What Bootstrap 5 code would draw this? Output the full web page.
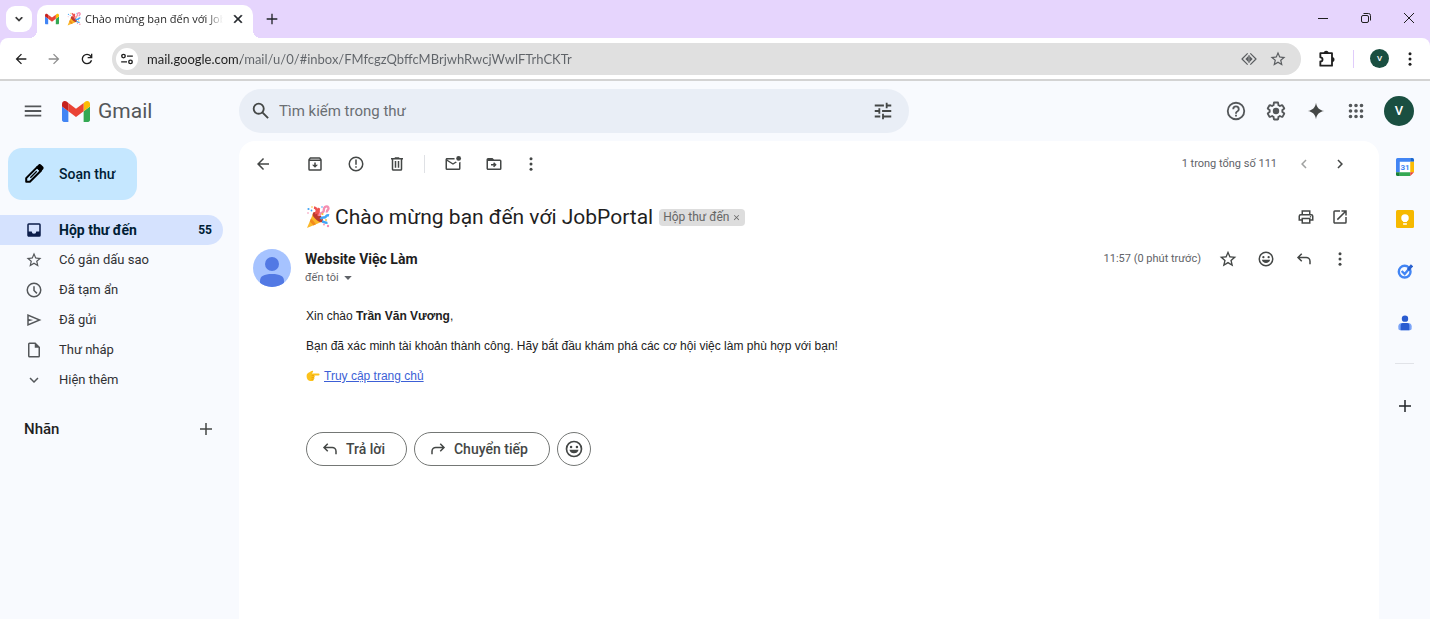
<!DOCTYPE html>
<html lang="vi">
<head>
<meta charset="utf-8">
<meta name="viewport" content="width=device-width, initial-scale=1">
<title>Chào mừng bạn đến với JobPortal - Gmail</title>
<link rel="stylesheet" href="https://cdn.jsdelivr.net/npm/bootstrap@5.3.0/dist/css/bootstrap.min.css">
<style>
  :root { --ink: #1f1f1f; --soft: #444746; --page: #f8fafe; --strip: #e6d5fd; }
  body { font-family: Roboto, "Liberation Sans", sans-serif; font-size: 14px; line-height: 20px; color: var(--ink); background: var(--page); }
  svg { display: block; flex: none; fill: currentColor; }
  .i14 { width: 14px; height: 14px; } .i16 { width: 16px; height: 16px; } .i18 { width: 18px; height: 18px; }
  .i20 { width: 20px; height: 20px; } .i22 { width: 22px; height: 22px; } .i24 { width: 24px; height: 24px; }
  .ib { border: 0; background: none; padding: 0; color: var(--soft); display: inline-flex; align-items: center; justify-content: center; flex: none; height: 30px; }
  .w33 { width: 33px; } .w34 { width: 34px; } .w38 { width: 38px; } .w40 { width: 40px; } .w41 { width: 41px; }
  .h20 { height: 20px; }

  .tabstrip { height: 38px; background: var(--strip); padding-left: 6px; }
  .tabsearch { width: 26px; height: 26px; border-radius: 9px; background: #fff; color: var(--ink); margin-top: 6px; }
  .tab-on { position: relative; width: 216px; height: 33px; margin: 5px 0 0 5px; padding: 0 8px 5px; border-radius: 10px 10px 0 0; background: #fff; }
  .tab-on::before, .tab-on::after { content: ""; position: absolute; bottom: 0; width: 8px; height: 8px; }
  .tab-on::before { left: -8px; background: radial-gradient(circle at 0 0, transparent 8px, #fff 8px); }
  .tab-on::after { right: -8px; background: radial-gradient(circle at 100% 0, transparent 8px, #fff 8px); }
  .tab-title { font-family: "Open Sans", sans-serif; font-size: 11px; overflow: hidden; white-space: nowrap; -webkit-mask-image: linear-gradient(90deg, #000 88%, transparent); mask-image: linear-gradient(90deg, #000 88%, transparent); }
  .winctl .ib { width: 43px; height: 36px; color: var(--ink); }

  .addressrow { height: 43px; background: #fff; border-bottom: 2px solid #d3d3d3; padding: 0 4px; border-radius: 8px 8px 0 0; }
  .chrome-top { background: var(--strip); }
  .addressrow .ib { color: var(--ink); }
  .addressrow .omni .dim { color: #5a5d60; }
  .omni { height: 32px; border-radius: 16px; background: #e0e0e0; margin-left: 9px; padding: 0 6px 0 4px; }
  .siteinfo { width: 22px; height: 22px; border-radius: 50%; background: #fff; }
  .url { font-family: Lato, "Open Sans", sans-serif; font-size: 13px; border: 0; outline: 0; padding: 0; margin-left: 9px; min-width: 0; color: #5f6368;
         background: linear-gradient(90deg, #1f1f1f 94px, #5f6368 94px); -webkit-background-clip: text; background-clip: text; -webkit-text-fill-color: transparent; }
  .ava { background: #1a4f41; color: #fff; border: 0; border-radius: 50%; padding: 0; font-weight: 500; }
  .ava-s { width: 19px; height: 19px; font-size: 8px; line-height: 19px; }
  .ava-l { width: 30px; height: 30px; font-size: 13px; line-height: 30px; }

  .apphead { height: 60px; }
  .apphead .ib { color: #54575a; }
  .side { width: 239px; flex: none; }
  .brand { font-size: 21px; line-height: 28px; color: #54575a; }
  .searchbox { height: 44px; width: 670px; min-width: 0; border-radius: 22px; background: #e9eef6; padding: 0 15px 0 11px; }
  .apphead .searchbox .ib, .apphead .spark { color: var(--soft); }
  .searchbox input { border: 0; outline: 0; background: none; font-size: 15px; padding: 0; margin-left: 7px; min-width: 0; color: var(--ink); }
  .searchbox input::placeholder { color: #6b6f73; opacity: 1; }

  .compose { margin: 7px 0 15px 8px; width: 129px; height: 52px; border: 0; border-radius: 14px; background: #c5e7ff; color: #001d35; font-weight: 500; padding: 0 0 0 15px; gap: 14px; }
  .compose svg { color: #000; }
  .folder { height: 30px; width: 223px; padding: 0 11px 0 25px; gap: 16px; font-size: 13px; border-radius: 0 15px 15px 0; color: #303134; text-decoration: none; }
  .folder svg { color: #54575a; }
  .folder.on { background: #d5e2fe; color: #001d35; font-weight: 700; font-size: 14px; }
  .folder.on svg { color: #0b1d4a; }
  .folder-count { font-size: 12px; }
  .labels { font-size: 15px; font-weight: 500; width: 223px; padding-left: 24px; margin-top: 19px; }

  .mail { background: #fff; border-radius: 16px 16px 0 0; min-height: calc(100vh - 141px); padding: 0 22px 24px 4px; }
  .mailbar { height: 45px; }
  .mailbar-acts { margin-left: 11px; }
  .vr-thin { width: 1px; height: 18px; background: #dfe1e5; }
  .mailbar .vr-thin { margin: 0 7px; }
  .stripe { background: #e0ccfb; }
  .count { font-size: 11px; color: #5f6368; }
  .subject { font-size: 21px; line-height: 28px; font-weight: 400; margin: 0 0 0 5px; }
  .chip { font-size: 12px; line-height: 16px; height: 17px; border-radius: 4px; background: #ddd; color: #666; padding: 0 4px; gap: 3px; margin-left: 6px; }
  .chip .ib { color: #666; height: 16px; }
  .subjectrow { height: 38px; margin-top: 12px; padding-left: 63px; }
  .sender { padding-left: 10px; margin-top: 13px; }
  .sender-text { margin-left: 14px; }
  .sender-name { font-size: 14px; line-height: 20px; font-weight: 700; }
  .sender-to { font-size: 11px; line-height: 18px; color: #5f6368; border: 0; background: none; padding: 0; }
  .letter { font-family: "Liberation Sans", Arial, sans-serif; font-size: 12px; line-height: 18px; color: #222; padding-left: 63px; margin-top: 20px; }
  .letter p { margin: 0 0 12px; }
  .letter a { color: #3c5fd6; }
  .actions { padding-left: 63px; margin-top: 47px; gap: 7px; }
  .pill { height: 34px; border: 1px solid #747775; border-radius: 17px; background: #fff; color: var(--soft); font-weight: 500; padding: 0 21px 0 14px; gap: 7px; }
  .pill-round { width: 34px; padding: 0; }
  .addons { width: 51px; flex: none; }
  .addons .ib { height: 52px; width: 51px; }
  .addons hr { width: 19px; margin: 14px 0 16px; border-color: #9aa0a6; }
</style>
</head>
<body>
<svg width="0" height="0" class="d-none" aria-hidden="true">
  <symbol id="gm" viewBox="52 42 88 66"><path fill="#4285f4" d="M58 108h14V74L52 59v43c0 3.320 2.690 6 6 6"/><path fill="#34a853" d="M120 108h14c3.320 0 6-2.690 6-6V59l-20 15"/><path fill="#fbbc04" d="M120 48v26l20-15v-8c0-7.420-8.470-11.650-14.400-7.200"/><path fill="#ea4335" d="M72 74V48l24 18 24-18v26L96 92"/><path fill="#c5221f" d="M52 51v8l20 15V48l-5.600-4.200c-5.940-4.450-14.400-.22-14.400 7.200"/></symbol>
  <symbol id="party" viewBox="0 0 24 24"><path fill="#fbb829" d="M1 23 7.500 7.500c4 1.500 7.500 5 9 9z"/><path fill="#f28b1c" d="M5 13.500c2 2 4 4 5 5.800L7.500 20.400 3.800 16.400z"/><path fill="#bd3a2e" d="M7 8c1-2 4.500-.5 7 2s4 5.800 2.500 7S11.500 16 9 13.500 6.200 9.500 7 8"/><path fill="none" stroke="#ef5350" stroke-width="2.400" d="M9 8.500C12 7 11 3 8 2.500M12 11c1.500-3 0-5 1-8"/><path fill="none" stroke="#f48fb1" stroke-width="2.400" d="M13.500 11c0-4 3-2.500 4-4.500s-.5-3 1.500-4.500 3.500 0 3.500 1.500-2 1.500-1.500 4"/><path fill="none" stroke="#42a5f5" stroke-width="2.400" d="M14.500 14c2-3 4-.5 5-2s2-2 3.500-1.500M16 16.500c2 0 3 2 5.500 1"/><g fill="#42a5f5"><circle cx="2.500" cy="4" r="1.100"/><circle cx="5.500" cy="5.500" r=".9"/><circle cx="16" cy="2" r=".8"/></g><g fill="#f48fb1"><circle cx="2" cy="8" r=".8"/><circle cx="22" cy="21" r="1.200"/><circle cx="18" cy="19.500" r=".9"/></g><g fill="#fbc02d"><circle cx="16.500" cy="9" r="1"/><circle cx="20" cy="15" r=".9"/><circle cx="6" cy="2" r=".8"/></g></symbol>
  <symbol id="hand" viewBox="0 0 24 24"><path fill="#fcc21b" d="M1 12c0-4 2.500-6 5-6.500C8 4 10 2.500 11.500 3c1.200.5.8 2-.2 3L10 7.600h11.500c2.300 0 2.300 3.600 0 3.600H14c1.600.5 1.500 3-.2 3.300 1.200.8.900 2.900-.8 3.100.8 1-.1 2.900-1.800 2.900H7C3.500 20.500 1 17 1 12"/><path fill="none" stroke="#e59600" stroke-width="1.100" d="M14 11.200H9.800M13.800 14.500H9.500M13 17.600H9.300"/></symbol>
  <symbol id="down" viewBox="0 0 24 24"><path d="M7.410 8.590 12 13.170l4.590-4.580L18 10l-6 6-6-6z"/></symbol>
  <symbol id="left" viewBox="0 0 24 24"><path d="M15.410 7.410 14 6l-6 6 6 6 1.410-1.410L10.830 12z"/></symbol>
  <symbol id="right" viewBox="0 0 24 24"><path d="M8.590 16.590 13.170 12 8.590 7.410 10 6l6 6-6 6z"/></symbol>
  <symbol id="x" viewBox="0 0 24 24"><path d="M19 6.410 17.590 5 12 10.590 6.410 5 5 6.410 10.590 12 5 17.590 6.410 19 12 13.410 17.590 19 19 17.590 13.410 12z"/></symbol>
  <symbol id="plus" viewBox="0 0 24 24"><path d="M20 13h-7v7h-2v-7H4v-2h7V4h2v7h7z"/></symbol>
  <symbol id="back" viewBox="0 0 24 24"><path d="M20 11H7.830l5.590-5.590L12 4l-8 8 8 8 1.410-1.410L7.830 13H20z"/></symbol>
  <symbol id="fwd" viewBox="0 0 24 24"><path d="m12 4-1.410 1.410L16.170 11H4v2h12.170l-5.580 5.590L12 20l8-8z"/></symbol>
  <symbol id="reload" viewBox="0 0 24 24"><path d="M12 20a8 8 0 1 1 0-16 7.800 7.800 0 0 1 6 2.760V4h2v7h-7V9h4.200A6 6 0 1 0 12 18a6 6 0 0 0 5.650-4h2.100A8 8 0 0 1 12 20"/></symbol>
  <symbol id="tune" viewBox="0 0 24 24"><path d="M3 17v2h6v-2zM3 5v2h10V5zm10 16v-2h8v-2h-8v-2h-2v6zM7 9v2H3v2h4v2h2V9zm14 4v-2H11v2zm-6-4h2V7h4V5h-4V3h-2z"/></symbol>
  <symbol id="site" viewBox="0 0 24 24"><g fill="none" stroke="currentColor" stroke-width="2.400"><circle cx="6" cy="7" r="3"/><circle cx="18" cy="17" r="3"/><path d="M12 7h10M2 17h10"/></g></symbol>
  <symbol id="star" viewBox="0 0 24 24"><path d="m22 9.240-7.190-.62L12 2 9.190 8.630 2 9.240l5.460 4.730L5.820 21 12 17.270 18.180 21l-1.630-7.030zM12 15.400l-3.760 2.270 1-4.280-3.320-2.880 4.380-.38L12 6.100l1.710 4.040 4.380.38-3.320 2.880 1 4.280z"/></symbol>
  <symbol id="lens" viewBox="0 0 24 24"><path fill="none" stroke="currentColor" stroke-width="1.800" stroke-linejoin="round" d="M10 3.500 1.500 12l8.500 8.500M14 3.500l8.500 8.500-8.500 8.500"/><path d="M11.300 7v10L6.500 12zM12.700 7v10l4.800-5z"/><path fill="none" stroke="currentColor" stroke-width="1.500" d="M12 6v12"/></symbol>
  <symbol id="ext" viewBox="0 0 24 24"><path fill="none" stroke="currentColor" stroke-width="2.200" stroke-linejoin="round" d="M4 5h14v15H4v-5c3.500 0 3.500-5 0-5z"/><path d="M8 5a3 3 0 0 1 6 0zM18 9.500a3 3 0 0 1 0 6z"/></symbol>
  <symbol id="dots" viewBox="0 0 24 24"><circle cx="12" cy="5" r="2"/><circle cx="12" cy="12" r="2"/><circle cx="12" cy="19" r="2"/></symbol>
  <symbol id="menu" viewBox="0 0 24 24"><path d="M3 18h18v-2H3zm0-5h18v-2H3zm0-7v2h18V6z"/></symbol>
  <symbol id="find" viewBox="0 0 24 24"><path d="M20.490 19l-5.730-5.730A6.480 6.480 0 0 0 16 9.500 6.500 6.500 0 1 0 9.500 16c1.410 0 2.720-.47 3.780-1.240L19 20.490zM5 9.500a4.500 4.500 0 1 1 9 0 4.500 4.500 0 0 1-9 0"/></symbol>
  <symbol id="help" viewBox="0 0 24 24"><path d="M11 18h2v-2h-2zm1-16a10 10 0 1 0 0 20 10 10 0 0 0 0-20m0 18a8 8 0 1 1 0-16 8 8 0 0 1 0 16m0-14a4 4 0 0 0-4 4h2a2 2 0 1 1 4 0c0 2-3 1.750-3 5h2c0-2.250 3-2.500 3-5a4 4 0 0 0-4-4"/></symbol>
  <symbol id="gear" viewBox="0 0 24 24"><path d="M13.850 22.250h-3.700c-.74 0-1.360-.54-1.450-1.270l-.27-1.890a7.200 7.200 0 0 1-.79-.46l-1.800.72c-.7.260-1.470-.03-1.810-.65L2.200 15.530c-.35-.66-.2-1.440.36-1.880l1.530-1.190a7 7 0 0 1 0-.91L2.570 10.360c-.59-.45-.74-1.260-.37-1.880l1.850-3.190c.34-.62 1.110-.9 1.790-.63l1.810.73c.26-.17.520-.32.780-.46l.27-1.910c.09-.7.710-1.250 1.440-1.250h3.700c.74 0 1.360.54 1.450 1.270l.27 1.890c.27.140.53.290.79.460l1.800-.72c.71-.26 1.480.03 1.820.65l1.840 3.180c.36.660.2 1.440-.36 1.880l-1.520 1.190a7 7 0 0 1 0 .91l1.520 1.190c.56.450.72 1.230.37 1.860l-1.860 3.220c-.34.620-1.110.9-1.800.63l-1.800-.72c-.26.170-.52.320-.78.460l-.27 1.910c-.1.680-.72 1.220-1.460 1.220m-3.230-2h2.760l.37-2.550.53-.22c.44-.18.880-.44 1.340-.78l.45-.34 2.380.96 1.380-2.400-2.030-1.580.07-.56c.06-.52.060-.95 0-1.550l-.07-.56 2.030-1.580-1.390-2.400-2.390.96-.45-.35a6 6 0 0 0-1.330-.77l-.52-.22-.37-2.550h-2.760l-.37 2.550-.53.210c-.44.190-.88.440-1.340.79l-.45.330-2.380-.95-1.390 2.390 2.030 1.580-.07.560a8 8 0 0 0 0 1.560l.07.560-2.030 1.580 1.390 2.400 2.390-.96.450.35c.42.320.86.570 1.330.77l.53.220z"/><circle cx="12" cy="12" r="3.500"/></symbol>
  <symbol id="spark" viewBox="0 0 24 24"><path d="M12 1c1 6.500 4.500 10 11 11-6.500 1-10 4.500-11 11-1-6.500-4.500-10-11-11 6.500-1 10-4.500 11-11"/></symbol>
  <symbol id="apps" viewBox="0 0 24 24"><path d="M6 8a2 2 0 1 0 0-4 2 2 0 0 0 0 4m6 12a2 2 0 1 0 0-4 2 2 0 0 0 0 4m-6 0a2 2 0 1 0 0-4 2 2 0 0 0 0 4m0-6a2 2 0 1 0 0-4 2 2 0 0 0 0 4m6 0a2 2 0 1 0 0-4 2 2 0 0 0 0 4m4-8a2 2 0 1 0 4 0 2 2 0 0 0-4 0m-4 2a2 2 0 1 0 0-4 2 2 0 0 0 0 4m6 6a2 2 0 1 0 0-4 2 2 0 0 0 0 4m0 6a2 2 0 1 0 0-4 2 2 0 0 0 0 4"/></symbol>
  <symbol id="pen" viewBox="0 0 24 24"><path fill="none" stroke="currentColor" stroke-width="2.200" stroke-linejoin="round" d="M3.500 20.500v-4L15.500 4.500l4 4L7.500 20.500z"/><path d="m14 4.500 3-2.800c1-.8 2-.6 2.800.2l2 2c.8.800 1 1.900.2 2.800l-2.800 3zM7.500 15.500l7-7 1 1-7 7z"/></symbol>
  <symbol id="inbox" viewBox="0 0 24 24"><path d="M19 3H5a2 2 0 0 0-2 2v14c0 1.100.9 2 2 2h14a2 2 0 0 0 2-2V5a2 2 0 0 0-2-2m0 11h-4a3 3 0 0 1-6 0H5V5h14z"/></symbol>
  <symbol id="clock" viewBox="0 0 24 24"><path d="M12 2a10 10 0 1 0 0 20 10 10 0 0 0 0-20m0 18a8 8 0 1 1 0-16 8 8 0 0 1 0 16m1-13h-2v6l4.200 4.200 1.400-1.400-3.600-3.600z"/></symbol>
  <symbol id="send" viewBox="0 0 24 24"><path d="M3 20V4l19 8zm2-3 11.850-5L5 7v3.500l6 1.500-6 1.500z"/></symbol>
  <symbol id="file" viewBox="0 0 24 24"><path d="M14 2H6a2 2 0 0 0-2 2v16c0 1.100.9 2 2 2h12a2 2 0 0 0 2-2V8zm4 18H6V4h7v5h5z"/></symbol>
  <symbol id="archive" viewBox="0 0 24 24"><path d="m20.540 5.230-1.390-1.680A1.450 1.450 0 0 0 18 3H6c-.47 0-.88.210-1.160.55L3.460 5.230C3.170 5.570 3 6.020 3 6.500V19a2 2 0 0 0 2 2h14a2 2 0 0 0 2-2V6.500c0-.48-.17-.93-.46-1.270M6.240 5h11.520l.83 1H5.420zM5 19V8h14v11zm8-9h-2v3H8l4 4 4-4h-3z"/></symbol>
  <symbol id="spam" viewBox="0 0 24 24"><path d="M12 2a10 10 0 1 0 0 20 10 10 0 0 0 0-20m0 18a8 8 0 1 1 0-16 8 8 0 0 1 0 16M11 6h2v7h-2zm0 9h2v2h-2z"/></symbol>
  <symbol id="bin" viewBox="0 0 24 24"><path d="M15 4V3H9v1H4v2h1v13c0 1.100.9 2 2 2h10a2 2 0 0 0 2-2V6h1V4zm2 15H7V6h10zM9 8h2v9H9zm4 0h2v9h-2z"/></symbol>
  <symbol id="unread" viewBox="0 0 24 24"><path d="M22 8.980V18a2 2 0 0 1-2 2H4a2 2 0 0 1-2-2V6c0-1.100.9-2 2-2h10.100a5 5 0 0 0 0 2H4l8 5 3.670-2.290c.47.430 1.020.76 1.630.98L12 13 4 8v10h16V9.900a5 5 0 0 0 2-.92"/><circle cx="19.500" cy="4.500" r="3.200"/></symbol>
  <symbol id="move" viewBox="0 0 24 24"><path d="M20 6h-8l-2-2H4a2 2 0 0 0-2 2v12c0 1.100.9 2 2 2h16a2 2 0 0 0 2-2V8a2 2 0 0 0-2-2m0 12H4V8h16zm-7.840-1.590L10.750 15l1-1H8v-2h3.750l-1-1 1.410-1.410L15.570 13z"/></symbol>
  <symbol id="print" viewBox="0 0 24 24"><path d="M19 8h-1V3H6v5H5a3 3 0 0 0-3 3v6h4v4h12v-4h4v-6a3 3 0 0 0-3-3M8 5h8v3H8zm8 14H8v-4h8zm4-4h-2v-2H6v2H4v-4c0-.55.450-1 1-1h14c.55 0 1 .45 1 1z"/><circle cx="18" cy="11.500" r="1"/></symbol>
  <symbol id="open" viewBox="0 0 24 24"><path d="M19 19H5V5h7V3H5a2 2 0 0 0-2 2v14c0 1.100.89 2 2 2h14a2 2 0 0 0 2-2v-7h-2zM14 3v2h3.590l-9.830 9.830 1.410 1.410L19 6.410V10h2V3z"/></symbol>
  <symbol id="smile" viewBox="0 0 24 24"><circle cx="15.500" cy="9.500" r="1.500"/><circle cx="8.500" cy="9.500" r="1.500"/><path d="M12 2a10 10 0 1 0 0 20 10 10 0 0 0 0-20m0 18a8 8 0 1 1 0-16 8 8 0 0 1 0 16M6.500 13a5.700 5.700 0 0 0 11 0z"/></symbol>
  <symbol id="reply" viewBox="0 0 24 24"><path fill="none" stroke="currentColor" stroke-width="2" d="M9 5 4 10l5 5M4 10h11a5 5 0 0 1 5 5v4"/></symbol>
  <symbol id="forward" viewBox="0 0 24 24"><path fill="none" stroke="currentColor" stroke-width="2" d="m15 5 5 5-5 5M20 10H9a5 5 0 0 0-5 5v4"/></symbol>
  <symbol id="caret" viewBox="0 0 24 24"><path d="m3 7 9 10 9-10z"/></symbol>
  <symbol id="cal" viewBox="0 0 24 24"><path fill="#fff" d="M5 5h14v14H5z"/><path fill="#4285f4" d="M2 0h17v5H5v14H0V2a2 2 0 0 1 2-2"/><path fill="#1967d2" d="M19 0h3a2 2 0 0 1 2 2v3h-5z"/><path fill="#fbbc04" d="M19 5h5v14h-5z"/><path fill="#34a853" d="M5 19h14v5H5z"/><path fill="#188038" d="M0 19h5v5H2a2 2 0 0 1-2-2z"/><path fill="#ea4335" d="M19 24v-5h5z"/></symbol>
  <symbol id="keep" viewBox="0 0 24 24"><rect width="24" height="24" rx="2" fill="#f6b900"/><circle cx="12" cy="10.500" r="5" fill="#fff"/><path fill="#fff" d="M9.500 14h5v2h-5zM9.500 17.500h5v2h-5z"/></symbol>
  <symbol id="tasks" viewBox="0 0 24 24"><circle cx="11.500" cy="13" r="8.800" fill="none" stroke="#4285f4" stroke-width="3.600"/><path fill="none" stroke="#4285f4" stroke-width="3.600" d="m7 12 4.500 4.500 6-7"/><path stroke="#2960cf" stroke-width="4.500" d="m16.500 10.500 6-7"/></symbol>
  <symbol id="person" viewBox="0 0 24 24"><circle cx="12" cy="5.500" r="4.800" fill="#2a5bd0"/><path fill="#7ba4f8" d="M7 12h10c3 0 5 2.500 5 5v3c0 2-1 3-3 3H5c-2 0-3-1-3-3v-3c0-2.500 2-5 5-5"/><path fill="#2a5bd0" d="M9 12h6c2.500 0 3.500 2 3.500 4v7h-13v-7c0-2 1-4 3.500-4"/></symbol>
</svg>

<div class="chrome-top">
<div class="tabstrip d-flex">
  <button class="ib tabsearch" aria-label="Tìm thẻ"><svg class="i14" stroke="currentColor"><use href="#down"/></svg></button>
  <div class="tab-on d-flex align-items-center">
    <svg class="i14"><use href="#gm"/></svg>
    <svg class="i14 ms-2"><use href="#party"/></svg>
    <span class="tab-title ms-1 flex-grow-1">Chào mừng bạn đến với JobPortal</span>
    <button class="ib ms-2" aria-label="Đóng thẻ"><svg class="i14 text-dark" stroke="currentColor"><use href="#x"/></svg></button>
  </div>
  <button class="ib w38 mt-1 text-dark" aria-label="Thẻ mới"><svg class="i16"><use href="#plus"/></svg></button>
  <div class="winctl ms-auto d-flex">
    <button class="ib" aria-label="Thu nhỏ"><svg class="i14" viewBox="0 0 14 14"><path d="M2 7h10v1H2z"/></svg></button>
    <button class="ib" aria-label="Khôi phục"><svg class="i14" viewBox="0 0 14 14" stroke="currentColor"><g fill="none"><rect x="2.500" y="4.500" width="7" height="7" rx="1.500"/><path d="M4.500 2.500h5a2 2 0 0 1 2 2v5"/></g></svg></button>
    <button class="ib" aria-label="Đóng"><svg class="i14" viewBox="0 0 14 14" stroke="currentColor"><path d="m2 2 10 10M12 2 2 12"/></svg></button>
  </div>
</div>

<div class="addressrow d-flex align-items-center">
  <button class="ib w33" aria-label="Quay lại"><svg class="i16"><use href="#back"/></svg></button>
  <button class="ib w33 opacity-50" aria-label="Tiến"><svg class="i16"><use href="#fwd"/></svg></button>
  <button class="ib w33" aria-label="Tải lại"><svg class="i16"><use href="#reload"/></svg></button>
  <div class="omni d-flex align-items-center flex-grow-1">
    <button class="ib siteinfo" aria-label="Thông tin trang"><svg class="i14"><use href="#site"/></svg></button>
    <input class="url flex-grow-1" aria-label="Địa chỉ" value="mail.google.com/mail/u/0/#inbox/FMfcgzQbffcMBrjwhRwcjWwlFTrhCKTr">
    <button class="ib dim px-2" aria-label="Ống kính"><svg class="i16"><use href="#lens"/></svg></button>
    <button class="ib dim px-2 ps-1" aria-label="Đánh dấu"><svg class="i18"><use href="#star"/></svg></button>
  </div>
  <button class="ib ms-3" aria-label="Tiện ích"><svg class="i20"><use href="#ext"/></svg></button>
  <span class="ms-3 me-3 vr-thin stripe"></span>
  <button class="ava ava-s" aria-label="Hồ sơ">V</button>
  <button class="ib w33 ms-1" aria-label="Menu"><svg class="i18"><use href="#dots"/></svg></button>
</div>
</div>

<header class="apphead d-flex align-items-center">
  <div class="side d-flex align-items-center ps-3">
    <button class="ib w34" aria-label="Trình đơn chính"><svg class="i22"><use href="#menu"/></svg></button>
    <a href="#" class="d-flex align-items-center text-decoration-none ms-2 ps-1 gap-2"><svg width="28" height="21"><use href="#gm"/></svg><span class="brand">Gmail</span></a>
  </div>
  <form class="searchbox d-flex align-items-center">
    <button type="button" class="ib" aria-label="Tìm kiếm"><svg class="i22"><use href="#find"/></svg></button>
    <input class="flex-grow-1" type="search" aria-label="Tìm kiếm trong thư" placeholder="Tìm kiếm trong thư">
    <button type="button" class="ib" aria-label="Tuỳ chọn tìm kiếm"><svg class="i22"><use href="#tune"/></svg></button>
  </form>
  <div class="d-flex align-items-center ms-auto pe-3">
    <button class="ib w40" aria-label="Hỗ trợ"><svg class="i22"><use href="#help"/></svg></button>
    <button class="ib w40" aria-label="Cài đặt"><svg class="i22"><use href="#gear"/></svg></button>
    <button class="ib w40 spark" aria-label="Gemini"><svg class="i18"><use href="#spark"/></svg></button>
    <button class="ib w40" aria-label="Ứng dụng"><svg class="i22"><use href="#apps"/></svg></button>
    <button class="ava ava-l ms-2" aria-label="Tài khoản">V</button>
  </div>
</header>

<div class="d-flex">
  <nav class="side" aria-label="Thư mục">
    <button class="compose d-flex align-items-center"><svg class="i22"><use href="#pen"/></svg><span>Soạn thư</span></button>
    <a href="#" class="folder on d-flex align-items-center"><svg class="i18"><use href="#inbox"/></svg><span class="flex-grow-1">Hộp thư đến</span><span class="folder-count">55</span></a>
    <a href="#" class="folder d-flex align-items-center"><svg class="i18"><use href="#star"/></svg><span>Có gắn dấu sao</span></a>
    <a href="#" class="folder d-flex align-items-center"><svg class="i18"><use href="#clock"/></svg><span>Đã tạm ẩn</span></a>
    <a href="#" class="folder d-flex align-items-center"><svg class="i18"><use href="#send"/></svg><span>Đã gửi</span></a>
    <a href="#" class="folder d-flex align-items-center"><svg class="i18"><use href="#file"/></svg><span>Thư nháp</span></a>
    <a href="#" class="folder d-flex align-items-center"><svg class="i18"><use href="#down"/></svg><span>Hiện thêm</span></a>
    <div class="labels d-flex align-items-center justify-content-between"><span>Nhãn</span><button class="ib w34" aria-label="Tạo nhãn mới"><svg class="i18"><use href="#plus"/></svg></button></div>
  </nav>

  <main class="mail flex-grow-1">
    <div class="mailbar d-flex align-items-center">
      <button class="ib w40" aria-label="Quay lại hộp thư"><svg class="i18"><use href="#back"/></svg></button>
      <div class="mailbar-acts d-flex align-items-center">
        <button class="ib w41" aria-label="Lưu trữ"><svg class="i18"><use href="#archive"/></svg></button>
        <button class="ib w41" aria-label="Báo cáo thư rác"><svg class="i18"><use href="#spam"/></svg></button>
        <button class="ib w41" aria-label="Xoá"><svg class="i18"><use href="#bin"/></svg></button>
        <span class="vr-thin"></span>
        <button class="ib w41" aria-label="Đánh dấu là chưa đọc"><svg class="i18"><use href="#unread"/></svg></button>
        <button class="ib w41" aria-label="Di chuyển tới"><svg class="i18"><use href="#move"/></svg></button>
        <button class="ib w34" aria-label="Thêm"><svg class="i18"><use href="#dots"/></svg></button>
      </div>
      <span class="count ms-auto me-2">1 trong tổng số 111</span>
      <button class="ib w38 opacity-50" aria-label="Mới hơn"><svg class="i18"><use href="#left"/></svg></button>
      <button class="ib w34" aria-label="Cũ hơn"><svg class="i18"><use href="#right"/></svg></button>
    </div>

    <div class="subjectrow d-flex align-items-center">
      <svg class="i24"><use href="#party"/></svg>
      <h1 class="subject">Chào mừng bạn đến với JobPortal</h1>
      <span class="chip d-flex align-items-center">Hộp thư đến <button class="ib" aria-label="Xoá nhãn"><svg width="9" height="9"><use href="#x"/></svg></button></span>
      <button class="ib w34 ms-auto" aria-label="In"><svg class="i18"><use href="#print"/></svg></button>
      <button class="ib w34" aria-label="Mở trong cửa sổ mới"><svg class="i18"><use href="#open"/></svg></button>
    </div>

    <div class="sender d-flex">
      <svg width="38" height="38" viewBox="0 0 38 38"><defs><clipPath id="disc"><circle cx="19" cy="19" r="19"/></clipPath></defs><g clip-path="url(#disc)"><path fill="#a6c3ff" d="M0 0h38v38H0z"/><circle cx="19" cy="15" r="7" fill="#5279e4"/><path fill="#5279e4" d="M7 32c0-5 4-7 12-7s12 2 12 7v6H7z"/></g></svg>
      <div class="sender-text">
        <div class="sender-name">Website Việc Làm</div>
        <button class="sender-to d-flex align-items-center gap-1">đến tôi <svg width="10" height="10"><use href="#caret"/></svg></button>
      </div>
      <div class="ms-auto d-flex align-items-start">
        <span class="count me-2">11:57 (0 phút trước)</span>
        <button class="ib w38 h20" aria-label="Gắn dấu sao"><svg class="i20"><use href="#star"/></svg></button>
        <button class="ib w38 h20" aria-label="Thêm biểu tượng cảm xúc"><svg class="i18"><use href="#smile"/></svg></button>
        <button class="ib w38 h20" aria-label="Trả lời nhanh"><svg class="i18"><use href="#reply"/></svg></button>
        <button class="ib w34 h20" aria-label="Thao tác khác"><svg class="i18"><use href="#dots"/></svg></button>
      </div>
    </div>

    <div class="letter">
      <p>Xin chào <strong>Trần Văn Vương</strong>,</p>
      <p>Bạn đã xác minh tài khoản thành công. Hãy bắt đầu khám phá các cơ hội việc làm phù hợp với bạn!</p>
      <p class="d-flex align-items-center gap-1"><svg class="i14"><use href="#hand"/></svg><a href="#">Truy cập trang chủ</a></p>
    </div>

    <div class="actions d-flex">
      <button class="pill d-flex align-items-center"><svg class="i18"><use href="#reply"/></svg>Trả lời</button>
      <button class="pill d-flex align-items-center"><svg class="i18"><use href="#forward"/></svg>Chuyển tiếp</button>
      <button class="pill pill-round d-flex align-items-center justify-content-center" aria-label="Cảm xúc"><svg class="i20"><use href="#smile"/></svg></button>
    </div>
  </main>

  <aside class="addons d-flex flex-column align-items-center" aria-label="Bảng điều khiển bên">
    <button class="ib" aria-label="Lịch"><svg class="i18" viewBox="0 0 18 18"><use href="#cal" width="18" height="18"/><text x="9" y="12" text-anchor="middle" font-size="8" font-weight="700" fill="#4285f4">31</text></svg></button>
    <button class="ib" aria-label="Keep"><svg class="i18"><use href="#keep"/></svg></button>
    <button class="ib" aria-label="Tasks"><svg class="i16"><use href="#tasks"/></svg></button>
    <button class="ib" aria-label="Danh bạ"><svg class="i16"><use href="#person"/></svg></button>
    <hr>
    <button class="ib" aria-label="Tải tiện ích bổ sung"><svg class="i18 text-dark"><use href="#plus"/></svg></button>
  </aside>
</div>
<script src="https://cdn.jsdelivr.net/npm/bootstrap@5.3.0/dist/js/bootstrap.bundle.min.js"></script>
</body>
</html>
